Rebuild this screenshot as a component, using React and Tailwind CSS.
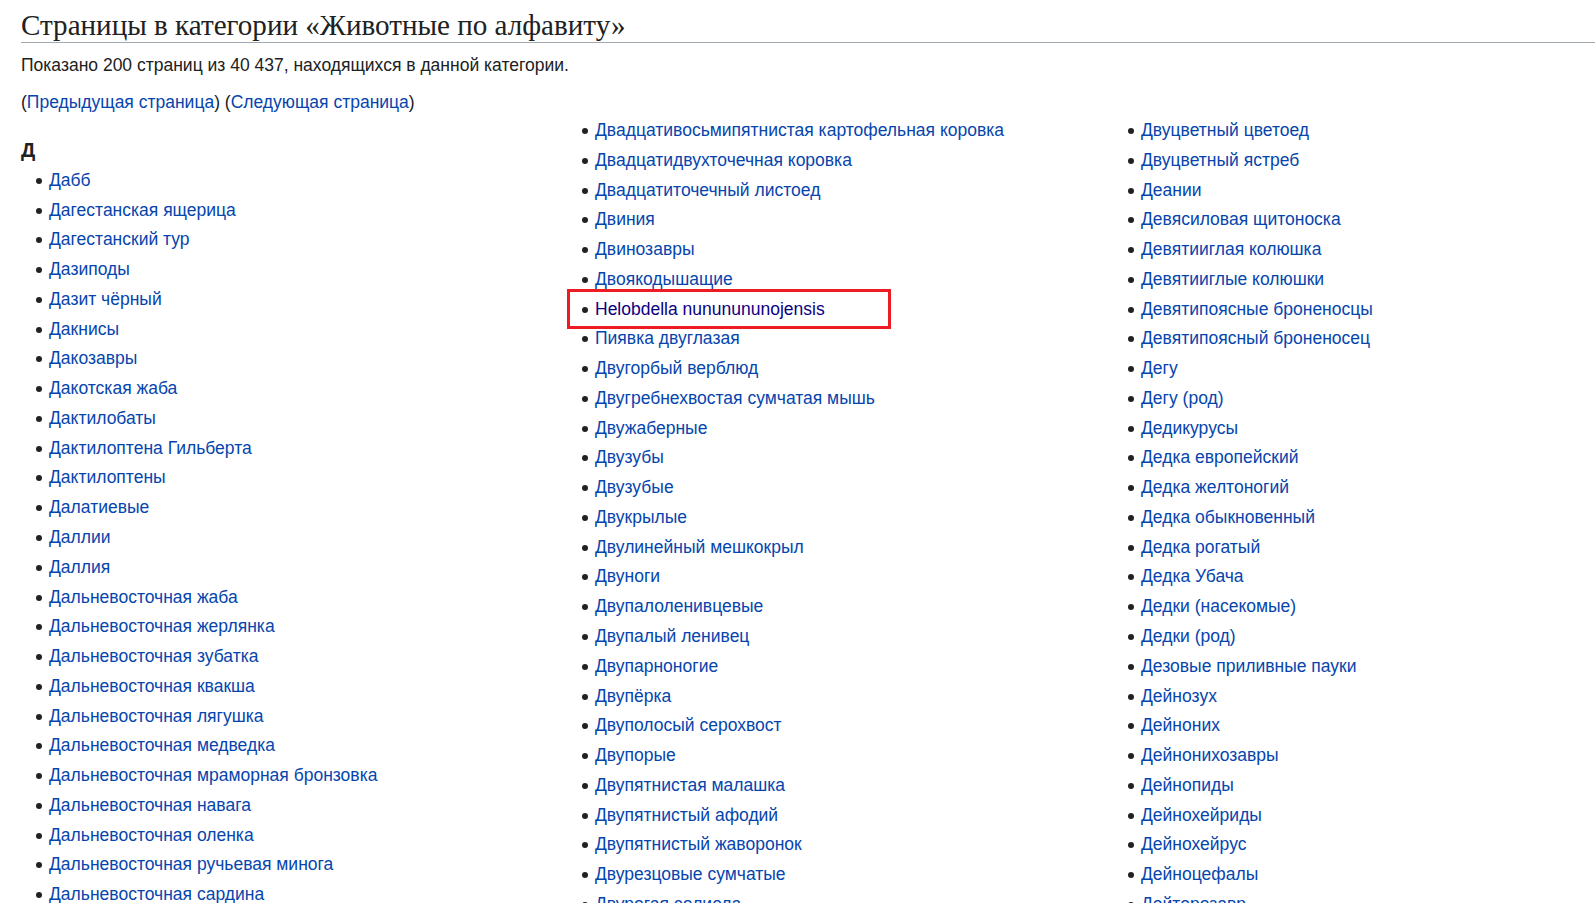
import React from "react";

const col1 = [
  "Дабб", "Дагестанская ящерица", "Дагестанский тур", "Дазиподы", "Дазит чёрный",
  "Дакнисы", "Дакозавры", "Дакотская жаба", "Дактилобаты", "Дактилоптена Гильберта",
  "Дактилоптены", "Далатиевые", "Даллии", "Даллия", "Дальневосточная жаба",
  "Дальневосточная жерлянка", "Дальневосточная зубатка", "Дальневосточная квакша",
  "Дальневосточная лягушка", "Дальневосточная медведка", "Дальневосточная мраморная бронзовка",
  "Дальневосточная навага", "Дальневосточная оленка", "Дальневосточная ручьевая минога",
  "Дальневосточная сардина",
];

const col2 = [
  "Двадцативосьмипятнистая картофельная коровка", "Двадцатидвухточечная коровка",
  "Двадцатиточечный листоед", "Двиния", "Двинозавры", "Двоякодышащие",
  "Helobdella nununununojensis", "Пиявка двуглазая", "Двугорбый верблюд",
  "Двугребнехвостая сумчатая мышь", "Двужаберные", "Двузубы", "Двузубые", "Двукрылые",
  "Двулинейный мешкокрыл", "Двуноги", "Двупалоленивцевые", "Двупалый ленивец",
  "Двупарноногие", "Двупёрка", "Двуполосый серохвост", "Двупорые", "Двупятнистая малашка",
  "Двупятнистый афодий", "Двупятнистый жаворонок", "Двурезцовые сумчатые", "Двурогая солиела",
];

const col3 = [
  "Двуцветный цветоед", "Двуцветный ястреб", "Деании", "Девясиловая щитоноска",
  "Девятииглая колюшка", "Девятииглые колюшки", "Девятипоясные броненосцы",
  "Девятипоясный броненосец", "Дегу", "Дегу (род)", "Дедикурусы", "Дедка европейский",
  "Дедка желтоногий", "Дедка обыкновенный", "Дедка рогатый", "Дедка Убача",
  "Дедки (насекомые)", "Дедки (род)", "Дезовые приливные пауки", "Дейнозух", "Дейноних",
  "Дейнонихозавры", "Дейнопиды", "Дейнохейриды", "Дейнохейрус", "Дейноцефалы", "Дейтерозавр",
];

const Item = ({ name }) => {
  const marked = name.startsWith("Helobdella");
  return (
    <li className="relative flex items-start leading-[28px] mb-[1.78px]">
      <span className="w-[6px] h-[6px] rounded-full bg-[#202122] mt-[12px] mr-[7px] shrink-0" />
      <a href="#" className={marked ? "text-[#0b0080]" : "text-[#0645ad]"}>{name}</a>
      {marked && (
        <span className="absolute left-[-15px] top-[-6px] w-[324px] h-[40px] border-[3px] border-[#ed1c24]" />
      )}
    </li>
  );
};

const List = ({ items }) => (
  <ul className="pl-[15px]">
    {items.map((n) => <Item key={n} name={n} />)}
  </ul>
);

export default function App() {
  return (
    <div className="h-[903px] overflow-hidden bg-white text-[#202122] pl-[21px] text-[17.5px] font-['Liberation_Sans',Arial,sans-serif]">
      <h1 className="font-['Liberation_Serif','Times_New_Roman',serif] text-[29.1px] leading-[34px] pt-[8px] border-b border-[#a2a9b1]">
        Страницы в категории «Животные по алфавиту»
      </h1>
      <p className="mt-[8px] leading-[28px]">
        Показано 200 страниц из 40 437, находящихся в данной категории.
      </p>
      <p className="mt-[9px] leading-[28px]">
        (<a href="#" className="text-[#0645ad]">Предыдущая страница</a>) (<a href="#" className="text-[#0645ad]">Следующая страница</a>)
      </p>
      <div className="grid grid-cols-3 gap-x-[64px] w-[1574px]">
        <div>
          <h3 className="font-bold text-[20px] leading-[28px] pt-[20px] pb-[1.8px]">Д</h3>
          <List items={col1} />
        </div>
        <List items={col2} />
        <List items={col3} />
      </div>
    </div>
  );
}
